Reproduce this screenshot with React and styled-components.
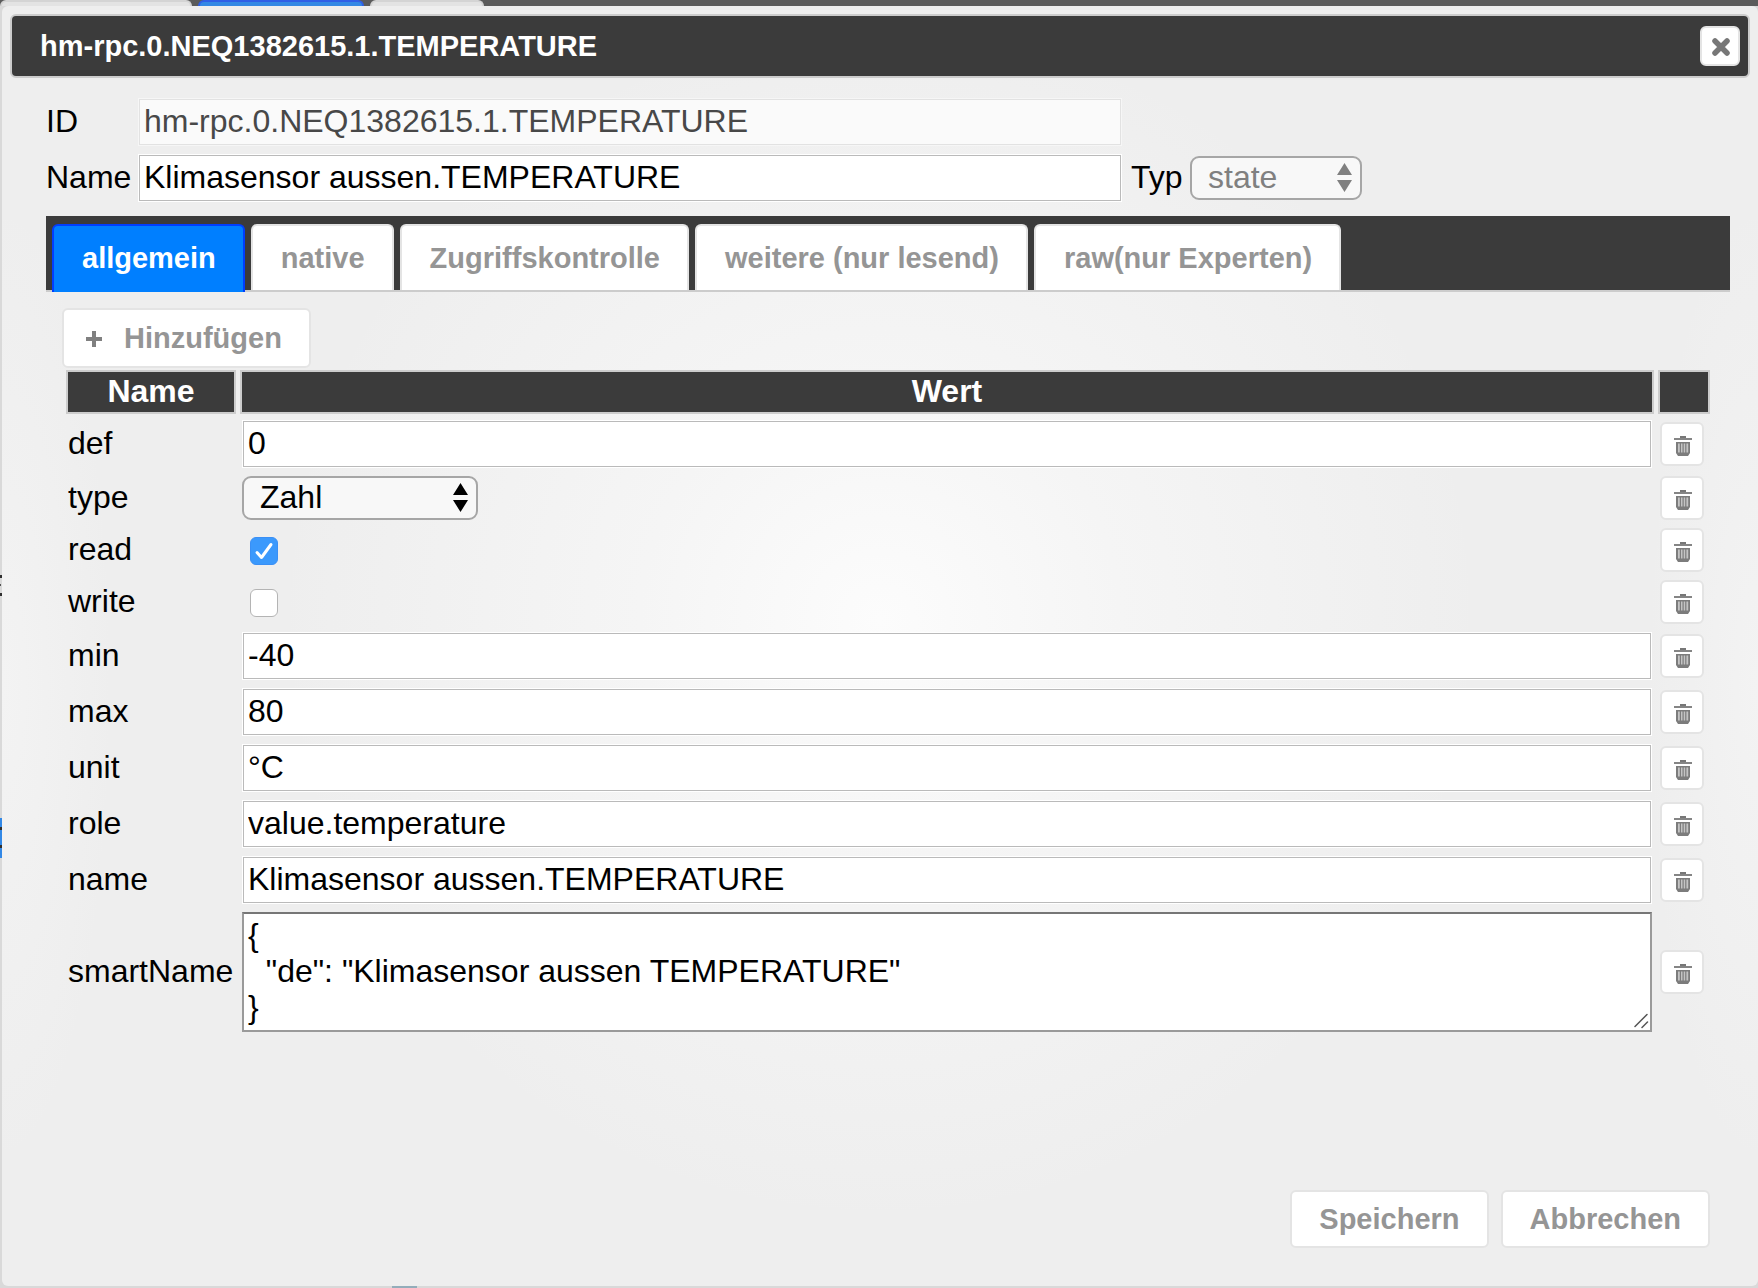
import React, { useState } from 'react'
import styled, { createGlobalStyle, css } from 'styled-components'

const GlobalStyle = createGlobalStyle`
  * {
    box-sizing: border-box;
  }

  body {
    margin: 0;
    font-family: 'Liberation Sans', Arial, Helvetica, sans-serif;
    font-size: 32px;
    line-height: 36px;
    color: #000;
  }

  input, select, textarea, button {
    font-family: inherit;
    margin: 0;
  }
`

const Page = styled.div`
  display: flex;
  flex-direction: column;
  min-height: 100vh;
  padding: 0 0 2px 2px;
  background:
    linear-gradient(#2f2f2f, #2f2f2f) 0 575px / 2px 3px no-repeat,
    linear-gradient(#555, #555) 0 584px / 1px 2px no-repeat,
    linear-gradient(#2f2f2f, #2f2f2f) 0 593px / 2px 3px no-repeat,
    linear-gradient(#2f2f2f, #2f2f2f) 0 827px / 2px 3px no-repeat,
    linear-gradient(#2f2f2f, #2f2f2f) 0 845px / 2px 3px no-repeat,
    linear-gradient(#3288e6, #3288e6) 0 818px / 2px 40px no-repeat,
    linear-gradient(#93adba, #93adba) 392px 100% / 25px 2px no-repeat,
    #d9d9d9;
`

/* slice of the main window's tab bar above the dialog */
const Backdrop = styled.div`
  display: flex;
  gap: 6px;
  height: 6px;
  margin-left: -2px;
  background: #5b5b5b;
`

const BackTab = styled.div`
  width: ${(p) => p.$width}px;
  height: 6px;
  border: 2px solid ${(p) => (p.$active ? '#2f5fe6' : '#d4d4d4')};
  border-bottom: 0;
  border-radius: 6px 6px 0 0;
  background: ${(p) => (p.$active ? '#3388e4' : '#e3e3e3')};
`

const Dialog = styled.div`
  flex: 1;
  display: flex;
  flex-direction: column;
  padding: 8px 8px 38px;
  border-radius: 6px;
  background:
    radial-gradient(circle 600px at 50% 48%, #fcfcfc 0%, #f5f5f5 40%, rgba(239, 239, 239, 0) 100%),
    radial-gradient(ellipse 110px 480px at 0 53%, #f3f3f3, rgba(239, 239, 239, 0)),
    radial-gradient(ellipse 110px 480px at 100% 53%, #f3f3f3, rgba(239, 239, 239, 0)),
    #eee;
`

const TitleBar = styled.header`
  display: flex;
  align-items: center;
  justify-content: space-between;
  height: 64px;
  padding: 0 8px 0 28px;
  border: 2px solid #ccc;
  border-radius: 6px;
  background: #3b3b3b;
`

const Title = styled.h1`
  margin: 0;
  font-size: 29px;
  color: #fff;
`

const buttonLook = css`
  border: 2px solid #e4e4e4;
  border-radius: 6px;
  background: #fff;
  color: #959595;
  cursor: pointer;
`

const Button = styled.button`
  ${buttonLook}
  display: flex;
  align-items: center;
  gap: 21px;
  height: ${(p) => (p.$icon ? 60 : 58)}px;
  padding: 0 27px 0 ${(p) => (p.$icon ? 21 : 27)}px;
  font-size: 29px;
  font-weight: bold;
`

const IconButton = styled.button`
  ${buttonLook}
  display: flex;
  align-items: center;
  justify-content: center;
  width: ${(p) => p.$size}px;
  height: ${(p) => p.$size}px;
  padding: ${(p) => (p.$size > 40 ? 4 : 2)}px 0 0 2px;
`

const Content = styled.main`
  display: flex;
  flex-direction: column;
  gap: 8px;
  padding: 20px 20px 0 36px;
`

const FormRow = styled.div`
  display: flex;
  align-items: center;
  height: 48px;
`

const FieldLabel = styled.label`
  flex: none;
  width: ${(p) => (p.$inline ? 68 : 92)}px;
  padding-bottom: 3px;
  padding-left: ${(p) => (p.$inline ? 9 : 0)}px;
`

const TextInput = styled.input`
  display: block;
  width: 100%;
  max-width: ${(p) => (p.$max ? `${p.$max}px` : 'none')};
  height: 48px;
  padding: 0 5px 1px;
  border: 1px solid #fff;
  border-radius: 0;
  box-shadow: inset 0 0 0 1px #bababa;
  background: #fff;
  font-size: 32px;
  color: #000;

  &:disabled {
    border-color: #f6f6f6;
    box-shadow: inset 0 0 0 1px #e2e2e2;
    background: #fafafa;
    color: #484848;
  }
`

const SelectBox = styled.span`
  position: relative;
  display: block;
  flex: none;
  width: ${(p) => p.$width}px;
  color: ${(p) => (p.$muted ? '#808080' : '#000')};

  svg {
    position: absolute;
    top: 7px;
    right: 10px;
    pointer-events: none;
  }
`

const SelectInput = styled.select`
  display: block;
  appearance: none;
  width: 100%;
  height: 44px;
  padding: 0 36px 3px 16px;
  border: 2px solid #a6a6a6;
  border-radius: 9px;
  background: #f8f8f8;
  font-size: 32px;
  color: inherit;
  opacity: 1;
`

const TabBar = styled.nav`
  display: flex;
  gap: 6px;
  height: 76px;
  margin-top: 6px;
  padding: 8px 6px 0;
  border-bottom: 2px solid #ccc;
  background: #3b3b3b;
`

const Tab = styled.button`
  height: ${(p) => (p.$active ? 68 : 66)}px;
  padding: 0 27px ${(p) => (p.$active ? 2 : 0)}px 28px;
  border: 2px solid ${(p) => (p.$active ? '#003eff' : '#e4e4e4')};
  border-bottom: 0;
  border-radius: 6px 6px 0 0;
  background: ${(p) => (p.$active ? '#007fff' : '#fff')};
  color: ${(p) => (p.$active ? '#fff' : '#959595')};
  font-size: 29px;
  font-weight: bold;
  white-space: nowrap;
  cursor: pointer;
`

const Panel = styled.section`
  padding: 8px 16px 0;
`

const Table = styled.table`
  width: 100%;
  margin-top: -2px;
  table-layout: fixed;
  border-collapse: separate;
  border-spacing: 4px;
`

const HeadCell = styled.th`
  width: ${(p) => (p.$width ? `${p.$width}px` : 'auto')};
  height: 44px;
  padding: 0 0 2px;
  border: 2px solid #ccc;
  background: #3b3b3b;
  color: #fff;
`

const Cell = styled.td`
  padding: 2px;
  vertical-align: middle;
`

const RowLabel = styled.label`
  display: block;
  padding-bottom: 3px;
  white-space: nowrap;
`

const CheckBox = styled.span`
  position: relative;
  display: block;
  width: 28px;
  height: 28px;
  margin: 2px 0 0 8px;

  svg {
    position: absolute;
    top: 0;
    left: 0;
    pointer-events: none;
  }
`

const CheckInput = styled.input`
  display: block;
  appearance: none;
  width: 28px;
  height: 28px;
  border: 1px solid #b4b4b4;
  border-radius: 6px;
  background: #fff;

  &:checked {
    border-color: #3a8ff5;
    background: #3b99fc;
  }
`

const TextAreaBox = styled.span`
  position: relative;
  display: block;

  svg {
    position: absolute;
    right: 3px;
    bottom: 3px;
    pointer-events: none;
  }
`

const TextArea = styled.textarea`
  display: block;
  width: 100%;
  height: 120px;
  padding: 3px 4px;
  border: 2px solid #9a9a9a;
  border-top-color: #767676;
  border-radius: 0;
  background: #fff;
  font-size: 32px;
  line-height: 36px;
  color: #000;
  overflow: hidden;
  resize: vertical;

  &::-webkit-resizer {
    background: transparent;
  }
`

const Footer = styled.footer`
  display: flex;
  justify-content: flex-end;
  gap: 12px;
  margin-top: auto;
  padding-right: 40px;
`

const TrashIcon = () => (
  <svg width="20" height="22" viewBox="0 0 20 22" aria-hidden="true">
    <path d="M7 1h6v2H7z" fill="#777" />
    <path d="M1 3h18v2H1z" fill="#858585" />
    <path d="M3 7h14v11l-2 3H5l-2-3z" fill="#7c7c7c" />
    <path d="M5 8.500h1.800v9H5zM8 8.500h1.500v9H8zM10.700 8.500h1.500v9h-1.500zM13.400 8.500h1.800v9h-1.800z" fill="#c4c4c4" />
  </svg>
)

const CloseIcon = () => (
  <svg width="20" height="20" viewBox="0 0 20 20" aria-hidden="true">
    <path d="M4 4l12 12M16 4L4 16" stroke="#777" strokeWidth="5.500" strokeLinecap="round" />
  </svg>
)

const PlusIcon = () => (
  <svg width="18" height="18" viewBox="0 0 18 18" aria-hidden="true">
    <path d="M9 2v16M1 10h16" stroke="#808080" strokeWidth="4" />
  </svg>
)

const Arrows = () => (
  <svg width="15" height="30" viewBox="0 0 15 30" fill="currentColor" aria-hidden="true">
    <path d="M7.500 0L15 12H0zM0 17h15L7.500 29z" />
  </svg>
)

const Check = () => (
  <svg width="28" height="28" viewBox="0 0 28 28" aria-hidden="true">
    <path
      d="M7 15.500l4.500 5L21 7.500"
      fill="none"
      stroke="#fff"
      strokeWidth="3"
      strokeLinecap="round"
      strokeLinejoin="round"
    />
  </svg>
)

const Grip = () => (
  <svg width="16" height="16" viewBox="0 0 16 16" aria-hidden="true">
    <path d="M2 13.500L14 1.500M9 14.500l5.500-5.500" stroke="#555" strokeWidth="1.500" strokeLinecap="round" />
  </svg>
)

const tabs = ['allgemein', 'native', 'Zugriffskontrolle', 'weitere (nur lesend)', 'raw(nur Experten)']

const rows = [
  { name: 'def', value: '0' },
  { name: 'type', kind: 'select', value: 'Zahl' },
  { name: 'read', kind: 'check', value: true },
  { name: 'write', kind: 'check', value: false },
  { name: 'min', value: '-40' },
  { name: 'max', value: '80' },
  { name: 'unit', value: '°C' },
  { name: 'role', value: 'value.temperature' },
  { name: 'name', value: 'Klimasensor aussen.TEMPERATURE' },
  {
    name: 'smartName',
    kind: 'json',
    value: '{\n  "de": "Klimasensor aussen TEMPERATURE"\n}',
  },
]

const CheckField = ({ id, initial }) => {
  const [checked, setChecked] = useState(initial)
  return (
    <CheckBox>
      <CheckInput
        id={id}
        type="checkbox"
        checked={checked}
        onChange={(e) => setChecked(e.target.checked)}
      />
      {checked && <Check />}
    </CheckBox>
  )
}

const ValueField = ({ id, row }) => {
  if (row.kind === 'select') {
    return (
      <SelectBox $width={236}>
        <SelectInput id={id} defaultValue={row.value}>
          <option>{row.value}</option>
        </SelectInput>
        <Arrows />
      </SelectBox>
    )
  }
  if (row.kind === 'check') return <CheckField id={id} initial={row.value} />
  if (row.kind === 'json') {
    return (
      <TextAreaBox>
        <TextArea id={id} defaultValue={row.value} spellCheck={false} />
        <Grip />
      </TextAreaBox>
    )
  }
  return <TextInput id={id} type="text" defaultValue={row.value} spellCheck={false} />
}

const App = () => {
  const [active, setActive] = useState(tabs[0])

  return (
    <>
      <GlobalStyle />
      <Page>
        <Backdrop>
          <BackTab $width={192} />
          <BackTab $width={166} $active />
          <BackTab $width={114} />
        </Backdrop>
        <Dialog role="dialog" aria-labelledby="dialog-title">
          <TitleBar>
            <Title id="dialog-title">hm-rpc.0.NEQ1382615.1.TEMPERATURE</Title>
            <IconButton $size={40} type="button" aria-label="close">
              <CloseIcon />
            </IconButton>
          </TitleBar>

          <Content>
            <FormRow>
              <FieldLabel htmlFor="object-id">ID</FieldLabel>
              <TextInput
                id="object-id"
                type="text"
                $max={984}
                defaultValue="hm-rpc.0.NEQ1382615.1.TEMPERATURE"
                disabled
              />
            </FormRow>
            <FormRow>
              <FieldLabel htmlFor="object-name">Name</FieldLabel>
              <TextInput
                id="object-name"
                type="text"
                $max={984}
                defaultValue="Klimasensor aussen.TEMPERATURE"
                spellCheck={false}
              />
              <FieldLabel htmlFor="object-type" $inline>Typ</FieldLabel>
              <SelectBox $width={172} $muted>
                <SelectInput id="object-type" defaultValue="state" disabled>
                  <option>state</option>
                </SelectInput>
                <Arrows />
              </SelectBox>
            </FormRow>

            <TabBar>
              {tabs.map((tab) => (
                <Tab key={tab} type="button" $active={tab === active} onClick={() => setActive(tab)}>
                  {tab}
                </Tab>
              ))}
            </TabBar>

            <Panel>
              <Button type="button" $icon>
                <PlusIcon />
                Hinzufügen
              </Button>
              <Table>
                <thead>
                  <tr>
                    <HeadCell $width={170}>Name</HeadCell>
                    <HeadCell>Wert</HeadCell>
                    <HeadCell $width={52} />
                  </tr>
                </thead>
                <tbody>
                  {rows.map((row) => (
                    <tr key={row.name}>
                      <Cell>
                        <RowLabel htmlFor={`common-${row.name}`}>{row.name}</RowLabel>
                      </Cell>
                      <Cell>
                        <ValueField id={`common-${row.name}`} row={row} />
                      </Cell>
                      <Cell>
                        <IconButton $size={44} type="button" aria-label="delete">
                          <TrashIcon />
                        </IconButton>
                      </Cell>
                    </tr>
                  ))}
                </tbody>
              </Table>
            </Panel>
          </Content>

          <Footer>
            <Button type="button">Speichern</Button>
            <Button type="button">Abbrechen</Button>
          </Footer>
        </Dialog>
      </Page>
    </>
  )
}

export default App
